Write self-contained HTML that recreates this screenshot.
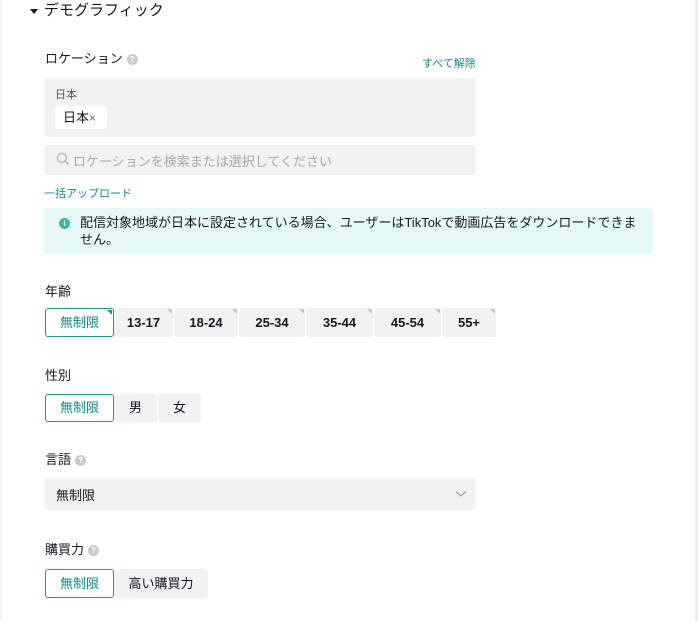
<!DOCTYPE html>
<html><head><meta charset="utf-8"><style>
*{margin:0;padding:0;box-sizing:border-box}
body{width:698px;height:621px;background:#fff;position:relative;overflow:hidden;font-family:"Liberation Sans","Noto Sans CJK JP",sans-serif;color:#161823}
.a{position:absolute;white-space:nowrap}
.lbl{font-size:13px;line-height:16px}
.q{display:inline-block;width:11px;height:11px;border-radius:50%;background:#c9cacc;color:#fff;font-size:8px;line-height:11px;text-align:center;vertical-align:1px;margin-left:4px;font-weight:bold}
.box{background:#f1f2f2;border-radius:4px}
.teal{color:#138a8a}
.btn{position:absolute;background:#f1f2f2;font-size:13px;text-align:center;border-radius:3px}
.sel{background:#fff;border:1px solid #1a9b98;color:#138a8a}
.btn.c::after{content:"";position:absolute;right:1px;top:1px;border-top:5px solid #c4c6c8;border-left:5px solid transparent}
.btn.sel.c::after{border-top-color:#1a9b98}
</style></head><body>
<div class="a" style="left:0;top:0;width:2px;height:621px;background:#f3f3f3"></div>
<div class="a" style="left:695px;top:0;width:3px;height:621px;background:#eeeeee"></div>
<div class="a" style="left:30px;top:9px;border-top:5px solid #161823;border-left:4px solid transparent;border-right:4px solid transparent"></div>
<div class="a" style="left:44px;top:2px;font-size:15px;line-height:18px">デモグラフィック</div>
<div class="a lbl" style="left:45px;top:51px">ロケーション<span class="q">?</span></div>
<div class="a teal" style="left:422px;top:55px;font-size:11px">すべて解除</div>
<div class="a box" style="left:44px;top:78px;width:432px;height:59px"></div>
<div class="a" style="left:55px;top:86px;font-size:11px;color:#555">日本</div>
<div class="a" style="left:55px;top:106px;width:52px;height:23px;background:#fff;border-radius:4px;font-size:13px;line-height:23px;padding-left:8px">日本<span style="color:#666;font-size:12px">×</span></div>
<div class="a box" style="left:44px;top:145px;width:432px;height:30px"></div>
<svg class="a" style="left:56px;top:152px" width="14" height="14" viewBox="0 0 14 14"><circle cx="6" cy="6" r="4.5" fill="none" stroke="#b5b7ba" stroke-width="1.4"/><path d="M9.3 9.3L12.5 12.5" stroke="#b5b7ba" stroke-width="1.6"/></svg>
<div class="a" style="left:73px;top:151px;font-size:13px;color:#a7a9ad">ロケーションを検索または選択してください</div>
<div class="a teal" style="left:44px;top:185px;font-size:11px">一括アップロード</div>
<div class="a" style="left:44px;top:208px;width:609px;height:46px;background:#e6f9f7;border-radius:4px"></div>
<div class="a" style="left:59px;top:218px;width:11px;height:11px;border-radius:50%;background:#3ab6ad;color:#fff;font-size:8px;line-height:11px;text-align:center;font-weight:bold">i</div>
<div class="a" style="left:80px;top:214px;font-size:13px;line-height:17px;white-space:normal;width:560px">配信対象地域が日本に設定されている場合、ユーザーはTikTokで動画広告をダウンロードできません。</div>
<div class="a lbl" style="left:45px;top:284px">年齢</div>
<div class="btn sel c" style="left:45px;top:308px;width:69px;height:29px;line-height:27px">無制限</div>
<div class="btn c" style="left:114px;top:308px;width:59px;height:29px;line-height:29px;font-weight:bold">13-17</div>
<div class="btn c" style="left:174px;top:308px;width:64px;height:29px;line-height:29px;font-weight:bold">18-24</div>
<div class="btn c" style="left:239px;top:308px;width:66px;height:29px;line-height:29px;font-weight:bold">25-34</div>
<div class="btn c" style="left:306px;top:308px;width:67px;height:29px;line-height:29px;font-weight:bold">35-44</div>
<div class="btn c" style="left:374px;top:308px;width:67px;height:29px;line-height:29px;font-weight:bold">45-54</div>
<div class="btn c" style="left:442px;top:308px;width:54px;height:29px;line-height:29px;font-weight:bold">55+</div>
<div class="a lbl" style="left:45px;top:368px">性別</div>
<div class="btn sel" style="left:45px;top:394px;width:69px;height:28px;line-height:26px">無制限</div>
<div class="btn" style="left:114px;top:394px;width:43px;height:28px;line-height:28px">男</div>
<div class="btn" style="left:158px;top:394px;width:43px;height:28px;line-height:28px">女</div>
<div class="a lbl" style="left:45px;top:452px">言語<span class="q">?</span></div>
<div class="a box" style="left:44px;top:478px;width:432px;height:32px"></div>
<div class="a" style="left:56px;top:485px;font-size:13px">無制限</div>
<svg class="a" style="left:455px;top:490px" width="12" height="8" viewBox="0 0 12 8"><path d="M1 1.5L6 6L11 1.5" fill="none" stroke="#8a8c90" stroke-width="1"/></svg>
<div class="a lbl" style="left:45px;top:542px">購買力<span class="q">?</span></div>
<div class="btn sel" style="left:45px;top:569px;width:69px;height:29px;line-height:27px">無制限</div>
<div class="btn" style="left:114px;top:569px;width:94px;height:29px;line-height:29px">高い購買力</div>
</body></html>
